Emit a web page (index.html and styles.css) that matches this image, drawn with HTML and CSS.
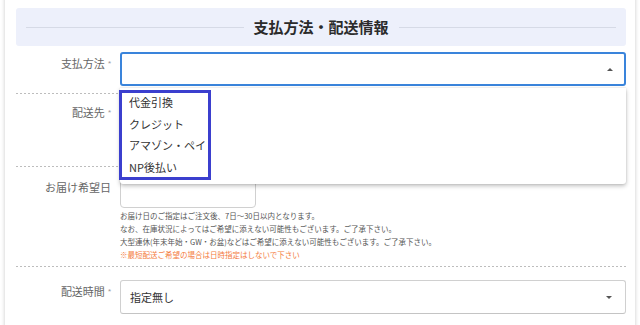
FILE: index.html
```html
<!DOCTYPE html>
<html lang="ja">
<head>
    <meta charset="UTF-8">
    <meta name="viewport" content="width=device-width, initial-scale=1">
    <title>支払方法・配送情報</title>
    <link rel="stylesheet" href="styles.css">
</head>
<body>
    <div class="card">
        <div class="sectionHeader">
            <span class="rule"></span>
            <h2>支払方法・配送情報</h2>
            <span class="rule"></span>
        </div>

        <!-- payment method -->
        <div class="formRow firstRow">
            <div class="label">支払方法<span class="req">*</span></div>
            <div class="field">
                <div class="selectBox focused">
                    <span class="value"></span>
                    <span class="arrow up"></span>
                </div>
                <div class="dropdown">
                    <div class="option">代金引換</div>
                    <div class="option">クレジット</div>
                    <div class="option">アマゾン・ペイ</div>
                    <div class="option">NP後払い</div>
                    <div class="highlight"></div>
                </div>
            </div>
        </div>

        <!-- shipping address -->
        <div class="formRow">
            <div class="label">配送先<span class="req">*</span></div>
            <div class="field">
                <div class="addressArea"></div>
            </div>
        </div>

        <!-- delivery date -->
        <div class="formRow dateRow">
            <div class="label">お届け希望日</div>
            <div class="field">
                <div class="dateInput"></div>
                <div class="notes">
                    <p>お届け日のご指定はご注文後、7日〜30日以内となります。</p>
                    <p>なお、在庫状況によってはご希望に添えない可能性もございます。ご了承下さい。</p>
                    <p>大型連休(年末年始・GW・お盆)などはご希望に添えない可能性もございます。ご了承下さい。</p>
                    <p class="warn">※最短配送ご希望の場合は日時指定はしないで下さい</p>
                </div>
            </div>
        </div>

        <!-- delivery time -->
        <div class="formRow timeRow">
            <div class="label">配送時間<span class="req">*</span></div>
            <div class="field">
                <div class="selectBox">
                    <span class="value">指定無し</span>
                    <span class="arrow"></span>
                </div>
            </div>
        </div>
    </div>
</body>
</html>
```

FILE: styles.css
```css
* {
    margin: 0;
    padding: 0;
    box-sizing: border-box;
}

/* Global styles */
body {
    font-family: "Noto Sans CJK JP", "Noto Sans", sans-serif;
    background-color: #fff;
    color: #333;
    overflow: hidden;
}

.card {
    width: 630px;
    margin: -6px 0 0 5px;
    padding: 14px 9px 20px 11px;
    background-color: #fff;
    box-shadow: 0 0 4px rgba(0, 0, 0, 0.22);
}

.sectionHeader {
    display: flex;
    align-items: center;
    gap: 10px;
    height: 38px;
    padding: 0 10px;
    background-color: #edf0fb;
    border-radius: 3px;
}

.sectionHeader .rule {
    flex: 1;
    height: 1px;
    background-color: #d6dae6;
}

.sectionHeader h2 {
    font-size: 15px;
    font-weight: bold;
    color: #2b2b2b;
    line-height: 20px;
}

/* rows */
.formRow {
    display: grid;
    grid-template-columns: 104px 1fr;
    padding: 6px 0 8px;
    background: linear-gradient(to right, #bdbdbd 50%, transparent 0) left bottom / 4px 1px repeat-x;
    border-bottom: 1px solid transparent;
}

.dateRow {
    padding: 8px 0 6px;
}

.timeRow {
    padding-top: 12px;
    background: none;
}

.label {
    text-align: right;
    padding: 3px 9px 0 0;
    font-size: 11px;
    line-height: 16px;
    color: #666;
}

.req {
    font-family: "Liberation Sans", sans-serif;
    font-size: 8px;
    color: #999;
    margin-left: 3px;
    vertical-align: 2px;
}

.field {
    position: relative;
}

/* select */
.selectBox {
    display: flex;
    align-items: center;
    justify-content: space-between;
    height: 34px;
    padding: 0 9px;
    border: 1px solid #d0d0d0;
    border-bottom-color: #c4c4c4;
    border-radius: 3px;
    background-color: #fff;
}

.selectBox.focused {
    border: 2px solid #3a84db;
    padding: 0 8px;
}

.selectBox .value {
    font-size: 11px;
    color: #333;
}

.arrow {
    width: 0;
    height: 0;
    border-left: 3px solid transparent;
    border-right: 3px solid transparent;
    border-top: 3px solid #555;
    margin-right: 4px;
}

.arrow.up {
    border-top: none;
    border-bottom: 3px solid #555;
    margin-right: 3px;
}

/* open menu */
.dropdown {
    position: absolute;
    top: 36px;
    left: 0;
    right: 0;
    z-index: 5;
    padding: 4px 0 6px;
    background-color: #fff;
    border-radius: 0 0 3px 3px;
    box-shadow: 0 2px 4px rgba(0, 0, 0, 0.25), 0 0 2px rgba(0, 0, 0, 0.12);
}

.option {
    height: 21.5px;
    line-height: 21.5px;
    padding-left: 9px;
    font-size: 11px;
    color: #333;
}

.highlight {
    position: absolute;
    top: 2px;
    left: -1px;
    width: 92px;
    height: 90px;
    border: 3px solid #3b3fce;
}

.addressArea {
    height: 58px;
}

/* date */
.dateInput {
    width: 136px;
    height: 32px;
    border: 1px solid #d0d0d0;
    border-radius: 4px;
}

.notes {
    padding-top: 1px;
    font-size: 7.5px;
    line-height: 13px;
    color: #555;
}

.notes .warn {
    color: #f47a3c;
}
```
